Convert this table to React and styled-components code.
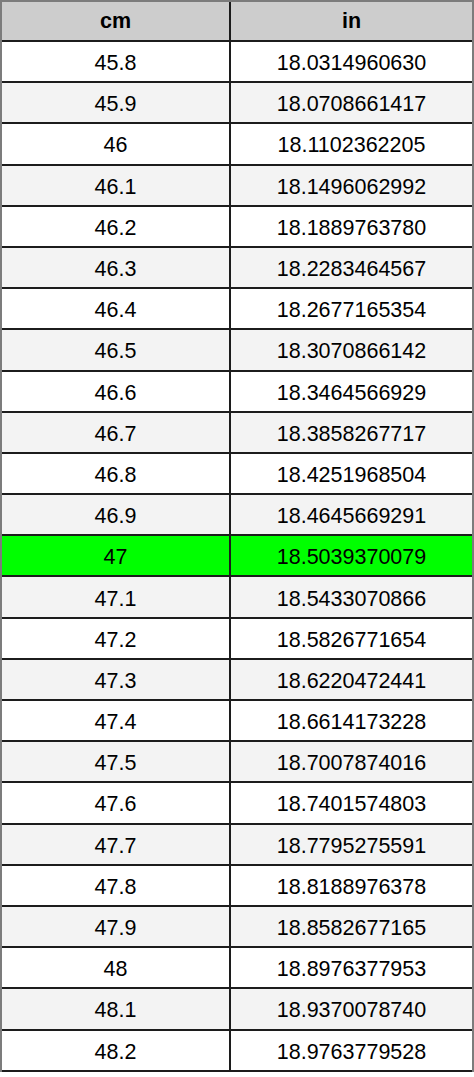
import React from "react";
import styled, { createGlobalStyle } from "styled-components";

const GlobalStyle = createGlobalStyle`
  html, body {
    margin: 0;
    padding: 0;
    background: #ffffff;
  }
  * { box-sizing: border-box; }
`;

const Table = styled.div`
  width: 474px;
  border-top: 2px solid #7c7c7c;
  border-left: 2px solid #7c7c7c;
  border-right: 2px solid #7c7c7c;
  font-family: "Liberation Sans", Arial, sans-serif;
  color: #000;
`;

const Row = styled.div`
  display: grid;
  grid-template-columns: 229px 1fr;
  height: ${(p) => (p.$header ? "40px" : "41.2px")};
  background: ${(p) => p.$bg};
  border-bottom: 2px solid #1c1c1c;
`;

const Cell = styled.div`
  display: flex;
  align-items: center;
  justify-content: center;
  font-size: 21.5px;
  font-weight: ${(p) => (p.$header ? 700 : 400)};
  padding-top: ${(p) => (p.$header ? "1px" : "4px")};
  border-right: ${(p) => (p.$first ? "2px solid #1c1c1c" : "none")};
  white-space: nowrap;
`;

const rows = [
  ["45.8", "18.0314960630"],
  ["45.9", "18.0708661417"],
  ["46", "18.1102362205"],
  ["46.1", "18.1496062992"],
  ["46.2", "18.1889763780"],
  ["46.3", "18.2283464567"],
  ["46.4", "18.2677165354"],
  ["46.5", "18.3070866142"],
  ["46.6", "18.3464566929"],
  ["46.7", "18.3858267717"],
  ["46.8", "18.4251968504"],
  ["46.9", "18.4645669291"],
  ["47", "18.5039370079"],
  ["47.1", "18.5433070866"],
  ["47.2", "18.5826771654"],
  ["47.3", "18.6220472441"],
  ["47.4", "18.6614173228"],
  ["47.5", "18.7007874016"],
  ["47.6", "18.7401574803"],
  ["47.7", "18.7795275591"],
  ["47.8", "18.8188976378"],
  ["47.9", "18.8582677165"],
  ["48", "18.8976377953"],
  ["48.1", "18.9370078740"],
  ["48.2", "18.9763779528"],
];

export default function App() {
  return (
    <>
      <GlobalStyle />
      <Table>
        <Row $header $bg="#cdcdcd">
          <Cell $header $first>cm</Cell>
          <Cell $header>in</Cell>
        </Row>
        {rows.map(([cm, inch], i) => {
          const bg = cm === "47" ? "#00ff00" : i % 2 === 1 ? "#f3f3f3" : "#ffffff";
          return (
            <Row key={cm} $bg={bg}>
              <Cell $first>{cm}</Cell>
              <Cell>{inch}</Cell>
            </Row>
          );
        })}
      </Table>
    </>
  );
}
